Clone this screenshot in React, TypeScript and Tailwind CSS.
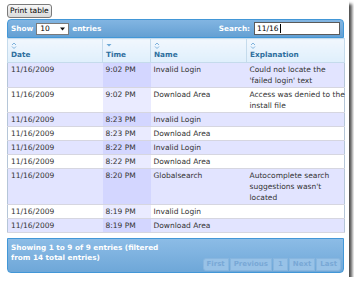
import React from "react";

type Row = { time: string; name: string; exp: string[] };

const rows: Row[] = [
  { time: "9:02 PM", name: "Invalid Login", exp: ["Could not locate the", "'failed login' text"] },
  { time: "9:02 PM", name: "Download Area", exp: ["Access was denied to the", "install file"] },
  { time: "8:23 PM", name: "Invalid Login", exp: [] },
  { time: "8:23 PM", name: "Download Area", exp: [] },
  { time: "8:22 PM", name: "Invalid Login", exp: [] },
  { time: "8:22 PM", name: "Download Area", exp: [] },
  { time: "8:20 PM", name: "Globalsearch", exp: ["Autocomplete search", "suggestions wasn't", "located"] },
  { time: "8:19 PM", name: "Invalid Login", exp: [] },
  { time: "8:19 PM", name: "Download Area", exp: [] },
];

function BothIcon() {
  return (
    <svg width="6" height="7" viewBox="0 0 6 7" className="block">
      <polyline points="1,3 3,1 5,3" fill="none" stroke="#7fb2dc" strokeWidth="1" />
      <polyline points="1,4.5 3,6.5 5,4.5" fill="none" stroke="#7fb2dc" strokeWidth="1" />
    </svg>
  );
}

function DownIcon() {
  return (
    <svg width="6" height="7" viewBox="0 0 6 7" className="block">
      <polygon points="0.5,2 5.5,2 3,4.5" fill="#6da8d5" />
    </svg>
  );
}

function Th({ label, sorted }: { label: string; sorted?: boolean }) {
  return (
    <th className="h-[24px] border border-[#c5dbec] bg-gradient-to-b from-[#f1f7fd] to-[#dfeffc] px-[3px] pt-[3px] text-left align-top font-bold">
      <div className="h-[8px]">{sorted ? <DownIcon /> : <BothIcon />}</div>
      <div className="text-[7.3px] leading-[10px] text-[#2e6e9e]">{label}</div>
    </th>
  );
}

export default function App() {
  return (
    <div className="w-[349px] h-[277px] bg-white pl-[7px] pt-[4px] font-['DejaVu_Sans',sans-serif] leading-none shadow-[3px_4px_3px_rgba(0,0,0,0.7)]">
      <button className="block h-[14px] rounded-[3px] border border-[#7a7a7a] bg-gradient-to-b from-[#f8f8f8] to-[#d9d9d9] px-[2px] text-[7.5px] leading-[12px] text-black">
        Print table
      </button>
      <div className="mt-[1px] w-[337px]">
        <div className="flex h-[19px] items-center justify-between rounded-t-[4px] border border-[#4297d7] bg-gradient-to-b from-[#82b5e2] to-[#64a0d3] px-[3px] text-[7.3px] font-bold text-white">
          <div className="flex items-center gap-[3px]">
            <span>Show</span>
            <div className="flex h-[12px] w-[33px] items-center justify-between border border-[#7a7a7a] bg-white pl-[3px] pr-[3px] font-normal text-black">
              <span className="text-[7.5px] leading-[10px]">10</span>
              <svg width="5" height="4" viewBox="0 0 5 4">
                <polygon points="0,0.5 5,0.5 2.5,3.5" fill="#111" />
              </svg>
            </div>
            <span>entries</span>
          </div>
          <div className="flex items-center gap-[4px]">
            <span>Search:</span>
            <div className="flex h-[13px] w-[86px] items-center border border-[#5a5a5a] bg-white pl-[2px] font-normal text-black">
              <span className="text-[7.5px] leading-[10px]">11/16</span>
              <span className="ml-[1px] h-[9px] w-px bg-black" />
            </div>
          </div>
        </div>
        <table className="w-[337px] table-fixed border-collapse text-[7.5px] leading-[11px] text-[#333]">
          <colgroup>
            <col className="w-[95px]" />
            <col className="w-[48px]" />
            <col className="w-[96px]" />
            <col className="w-[98px]" />
          </colgroup>
          <thead>
            <tr>
              <Th label="Date" />
              <Th label="Time" sorted />
              <Th label="Name" />
              <Th label="Explanation" />
            </tr>
          </thead>
          <tbody className="border-x border-[#b5c6d8]">
            {rows.map((r, i) => {
              const odd = i % 2 === 0;
              return (
                <tr key={i} className={odd ? "bg-[#e2e4ff]" : "bg-white"}>
                  <td className="border-b border-[#d6d6e0] px-[3px] py-[1px] align-top">11/16/2009</td>
                  <td className={odd ? "border-b border-[#d6d6e0] bg-[#d3d6ff] px-[3px] py-[1px] align-top" : "border-b border-[#d6d6e0] bg-[#eaebff] px-[3px] py-[1px] align-top"}>
                    {r.time}
                  </td>
                  <td className="border-b border-[#d6d6e0] px-[3px] py-[1px] align-top">{r.name}</td>
                  <td className="whitespace-nowrap border-b border-[#d6d6e0] px-[3px] py-[1px] align-top">
                    {r.exp.map((l, j) => (
                      <div key={j}>{l}</div>
                    ))}
                  </td>
                </tr>
              );
            })}
          </tbody>
        </table>
        <div className="mt-[5px] flex h-[35px] justify-between rounded-b-[4px] border border-[#4297d7] bg-gradient-to-b from-[#8cbce6] to-[#6ea7d8] pl-[3px] pr-[2px] pb-[1px]">
          <div className="w-[160px] pt-[4px] text-[7.3px] font-bold leading-[10px] text-white">
            Showing 1 to 9 of 9 entries (filtered from 14 total entries)
          </div>
          <div className="flex items-end gap-[1px] self-end text-[7px] font-bold leading-[11px] text-[#78a8d6]">
            <span className="rounded-l-[3px] border border-[#88b6df] bg-[#98c2e7] px-[3px]">First</span>
            <span className="border border-[#88b6df] bg-[#98c2e7] px-[3px]">Previous</span>
            <span className="border border-[#88b6df] bg-[#98c2e7] px-[4px]">1</span>
            <span className="border border-[#88b6df] bg-[#98c2e7] px-[3px]">Next</span>
            <span className="rounded-r-[3px] border border-[#88b6df] bg-[#98c2e7] px-[3px]">Last</span>
          </div>
        </div>
      </div>
    </div>
  );
}
